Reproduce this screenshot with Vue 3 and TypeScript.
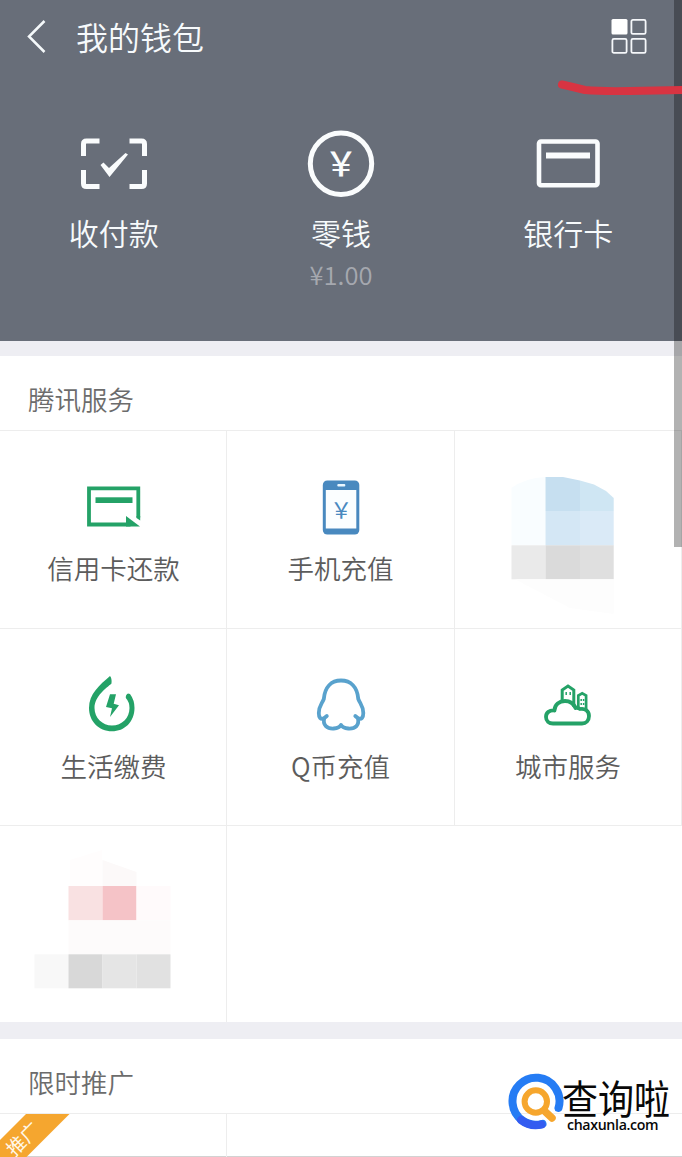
<script setup lang="ts">
interface Service {
  id: string
  label: string
}

const services: Service[] = [
  { id: 'credit', label: '信用卡还款' },
  { id: 'phone', label: '手机充值' },
  { id: 'mosaic-blue', label: '' },
  { id: 'utility', label: '生活缴费' },
  { id: 'qcoin', label: 'Q币充值' },
  { id: 'city', label: '城市服务' },
  { id: 'mosaic-red', label: '' },
]
</script>

<template>
  <div class="screen">
    <header class="bar">
      <svg class="back" width="24" height="40" viewBox="24 17 24 40">
        <path d="M44.500 21 L29 36.500 L44.500 52" fill="none" stroke="#f5f9fb" stroke-width="2.500" />
      </svg>
      <h1 class="title">我的钱包</h1>
      <svg class="menu" width="36" height="36" viewBox="0 0 36 36" fill="none" stroke="#f5f7fa" stroke-width="1.800">
        <rect x="0.500" y="1" width="16" height="15.500" rx="1.500" fill="#fff" stroke="none" />
        <rect x="20.400" y="1.900" width="14.200" height="14" rx="1.500" />
        <rect x="1.400" y="20.900" width="14.200" height="14" rx="1.500" />
        <rect x="20.400" y="20.900" width="14.200" height="14" rx="1.500" />
      </svg>
    </header>

    <section class="hero">
      <div class="hero-item">
        <svg class="icon" viewBox="73.500 124 80 80">
          <g fill="none" stroke="#fafcfd" stroke-width="5">
            <path d="M99 141 H86 Q83 141 83 144 V156" />
            <path d="M129 141 H141 Q144 141 144 144 V156" />
            <path d="M99 186.500 H86 Q83 186.500 83 183.500 V170" />
            <path d="M129 186.500 H141 Q144 186.500 144 183.500 V170" />
          </g>
          <path d="M100 165 L103 162.500 L108.500 168 L125 153 L127.500 154.500 L109 177 Z" fill="#fafcfd" />
        </svg>
        <span class="hero-label">收付款</span>
      </div>
      <div class="hero-item">
        <svg class="icon" viewBox="300.700 124 80 80">
          <circle cx="340.700" cy="163.800" r="30.700" fill="none" stroke="#fafcfd" stroke-width="5" />
          <text class="yuan" x="340.700" y="176" font-size="33" fill="#fafcfd">&#xFFE5;</text>
        </svg>
        <span class="hero-label">零钱</span>
        <span class="amount">¥1.00</span>
      </div>
      <div class="hero-item">
        <svg class="icon" viewBox="528 124 80 80">
          <rect x="539" y="141.500" width="58.500" height="43.700" rx="2" fill="none" stroke="#fafcfd" stroke-width="4.600" />
          <rect x="546" y="152.500" width="44" height="6" fill="#fafcfd" />
        </svg>
        <span class="hero-label">银行卡</span>
      </div>
    </section>

    <section class="block">
      <h2 class="block-title">腾讯服务</h2>
      <div class="grid services">
        <div v-for="s in services" :key="s.id" class="cell">
          <svg v-if="s.id === 'credit'" class="icon" viewBox="73.500 468 80 80">
            <path d="M137.800 517.500 V488.300 H88.500 V524.500 H130" fill="none" stroke="#24a267" stroke-width="3.800" />
            <rect x="95" y="497.300" width="37" height="5.700" fill="#24a267" />
            <path d="M125.500 526.400 V516 L139.500 526.400 Z" fill="#24a267" />
            <path d="M136 516 H139.700 V520.500 L136 518 Z" fill="#24a267" />
          </svg>
          <svg v-else-if="s.id === 'phone'" class="icon" viewBox="300.700 468 80 80">
            <rect x="322.500" y="480.500" width="36.500" height="54" rx="4.500" fill="#4989bf" />
            <rect x="325.500" y="490" width="30.500" height="38.500" fill="#fbfeff" />
            <rect x="337" y="484" width="8" height="2.500" rx="1" fill="#eaf7ff" />
            <text class="yuan thin" x="340.900" y="518" font-size="22" fill="#4989bf">&#xFFE5;</text>
          </svg>
          <svg v-else-if="s.id === 'utility'" class="icon" viewBox="73.500 666 80 80">
            <path d="M109.500 676 Q111.500 678 111 683.500 C106 688 94 696 94 708 C94 718 102 725.500 111.500 725.500 C121.500 725.500 129 718 129 708 Q129 702 125.300 698 Q125 694.500 127.500 693.500 L129.500 694 Q134 700 134 708 C134 722 124 731.300 111.500 731.300 C98 731.300 88.500 721 88.500 708 C88.500 694 99 685 109.500 676 Z" fill="#24a267" />
            <path d="M109.500 694.300 L115.500 694.300 L113.200 703.800 L118.500 705.300 L109.500 717 L111.500 708.200 L105.500 707 Z" fill="#24a267" />
          </svg>
          <svg v-else-if="s.id === 'qcoin'" class="icon" viewBox="300.700 666 80 80">
            <path
              d="M326.500 716 L323.500 718.500 Q318.500 720 318.500 713 C318.500 706 321.500 704 323.500 699 C324.500 687 331 680.500 340.700 680.500 C350.500 680.500 357 687 358 699 C360 704 363 706 363 713 Q363 720 358 718.500 L355 716 M324 718 C322 725 327 729 333.500 728.500 Q339 728 340.700 725 Q342.500 728 348 728.500 C355 729 359.500 725 357.500 718"
              fill="none" stroke="#59a2cd" stroke-width="3.800" stroke-linejoin="round" stroke-linecap="round"
            />
          </svg>
          <svg v-else-if="s.id === 'city'" class="icon" viewBox="528 666 80 80" fill="none" stroke="#24a267">
            <path d="M553 723.500 C549 723.500 546 721 546 717 C546 712.500 549.500 710 554.500 710.500 C554.500 704.500 559.500 701 565 701 C570 701 573.500 703.500 575.500 708 Q577.500 707.200 580 709 C585 708 589 711 589 716 C589 720.500 586 723.500 582 723.500 Z" stroke-width="3.800" stroke-linejoin="round" />
            <path d="M562.200 702 V690 L568 686 L573.800 690 V707" stroke-width="3" />
            <path d="M578.300 709 V695.500 L582.200 693.300 L586.100 695.500 V710" stroke-width="2.700" />
            <path d="M566.200 692 V695 M570.200 692 V695 M581.200 699 V701 M583.600 699 V701 M581.200 703 V705 M583.600 703 V705" stroke-width="1.500" />
          </svg>
          <svg v-else-if="s.id === 'mosaic-blue'" class="mosaic" viewBox="455 431 227 197">
            <path d="M511.500 488 Q525 478 545.500 477 V545 H511.500 Z" fill="#f9fdff" />
            <path d="M545.500 477 H563 L580 480.500 V511 H545.500 Z" fill="#c6dff0" />
            <path d="M580 480.500 L594 484.500 L606 491 L613.700 498 V511 H580 Z" fill="#cfe6f3" />
            <rect x="545.500" y="511" width="34.500" height="34.500" fill="#d4e7f5" />
            <rect x="580" y="511" width="33.700" height="34.500" fill="#daeaf7" />
            <rect x="511.500" y="545.300" width="34" height="34" fill="#eaeaea" />
            <rect x="545.500" y="545.300" width="34.500" height="34" fill="#dadada" />
            <rect x="580" y="545.300" width="33.700" height="34" fill="#dfdfdf" />
            <path d="M515 579.300 H613.700 V614 L570 608 Z" fill="#fdfdfd" />
          </svg>
          <svg v-else class="mosaic" viewBox="0 826 227 197">
            <path d="M70 860 L102 850 V886 H70 Z" fill="#fffdfd" />
            <path d="M102.500 860 L136.500 872 V886 H102.500 Z" fill="#fcf9f9" />
            <rect x="68.500" y="886" width="34" height="34.300" fill="#f9e1e2" />
            <rect x="102.500" y="886" width="34" height="34.300" fill="#f5c3c7" />
            <rect x="136.500" y="886" width="34" height="34.300" fill="#fffafb" />
            <rect x="68.500" y="920.300" width="102" height="34" fill="#fdfbfb" />
            <rect x="34.500" y="954.300" width="34" height="34" fill="#f8f8f8" />
            <rect x="68.500" y="954.300" width="34" height="34" fill="#d8d8d8" />
            <rect x="102.500" y="954.300" width="34" height="34" fill="#e5e5e5" />
            <rect x="136.500" y="954.300" width="34" height="34" fill="#e1e1e1" />
          </svg>
          <span v-if="s.label" class="label">{{ s.label }}</span>
        </div>
      </div>
    </section>

    <section class="block promo">
      <h2 class="block-title">限时推广</h2>
      <div class="grid">
        <div class="cell promo-cell">
          <svg class="ribbon" width="70" height="43" viewBox="0 1114 70 43">
            <path d="M26 1114 H69.500 L26.500 1157 H0 V1140 Z" fill="#f5a62f" />
            <text class="ribbon-text" transform="translate(14.500 1157.500) rotate(-45)" font-size="19" fill="#fff8e9">推广</text>
          </svg>
        </div>
      </div>
    </section>

    <div class="scrollbar"></div>
    <svg class="marker" width="126" height="24" viewBox="556 76 126 24">
      <path d="M562 84.500 Q573 87 585 90 Q600 91.500 630 91 L684 90" fill="none" stroke="#d83442" stroke-width="8" stroke-linecap="round" />
    </svg>

    <div class="watermark">
      <svg class="logo" width="60" height="60" viewBox="506 1072 60 60" fill="none">
        <path d="M542.500 1123.800 A23.500 23.500 0 1 1 558.500 1108" stroke="#257cf4" stroke-width="8" stroke-linecap="round" />
        <path d="M521 1120 Q530 1127 541.500 1124.500" stroke="#335cf0" stroke-width="8" stroke-linecap="round" />
        <circle cx="535.800" cy="1101.500" r="11.200" stroke="#f6a62d" stroke-width="6" />
        <path d="M544.500 1111 L552 1118" stroke="#f6a62d" stroke-width="7.500" stroke-linecap="round" />
      </svg>
      <div class="brand">
        <span class="brand-name">查询啦</span>
        <span class="brand-url">chaxunla.com</span>
      </div>
    </div>
  </div>
</template>

<style>
body {
  margin: 0;
}
</style>

<style scoped>
.screen {
  position: relative;
  width: 682px;
  height: 1157px;
  overflow: hidden;
  background: #eeeef3;
  font-family: "Noto Sans CJK SC", sans-serif;
  font-weight: 350;
  box-sizing: border-box;
}
.bar {
  display: flex;
  align-items: center;
  height: 74px;
  background: #686e79;
  padding: 0 35px 0 24px;
  box-sizing: border-box;
}
.title {
  margin: 0 auto 0 28px;
  color: #f7fafc;
  font-size: 32px;
  font-weight: 350;
  line-height: 72px;
  height: 74px;
}
.menu {
  margin-bottom: 2px;
}
.hero {
  display: grid;
  grid-template-columns: repeat(3, 1fr);
  height: 267px;
  padding-top: 50px;
  box-sizing: border-box;
  background: #686e79;
}
.hero-item,
.cell {
  display: flex;
  flex-direction: column;
  align-items: center;
}
.icon {
  width: 80px;
  height: 80px;
  flex: none;
}
.yuan {
  text-anchor: middle;
  font-weight: 500;
}
.thin {
  font-weight: 400;
}
.hero-label {
  margin-top: 8px;
  font-size: 30px;
  line-height: 40px;
  color: #f7fafc;
}
.amount {
  margin-top: 6px;
  font-size: 25.500px;
  line-height: 32px;
  color: #a5a8af;
}
.block {
  margin-top: 15px;
  background: #fff;
}
.block-title {
  margin: 0;
  height: 74px;
  padding: 6px 28px 0;
  box-sizing: border-box;
  font-size: 26.500px;
  font-weight: 350;
  line-height: 73px;
  color: #6c6c6c;
}
.grid {
  display: grid;
  grid-template-columns: 227px 228px 227px;
  border-top: 1px solid #ededed;
}
.services {
  grid-template-rows: 198px 197px 196px;
}
.cell {
  padding-top: 37px;
  box-sizing: border-box;
  border-right: 1px solid #ededed;
  border-bottom: 1px solid #ededed;
}
.cell:nth-child(3n + 1) {
  padding-left: 1px;
}
.cell:nth-child(7) {
  border-bottom: 0;
}
.label {
  margin-top: 2px;
  font-size: 26.500px;
  line-height: 36px;
  color: #5c5c5c;
}
.mosaic {
  width: 227px;
  height: 197px;
  flex: none;
  margin-top: -37px;
}
.promo {
  margin-top: 17px;
}
.grid .promo-cell {
  padding: 0;
  align-items: flex-start;
  border-bottom: 0;
}
.promo .promo-cell:nth-child(3n + 1) {
  padding-left: 0;
}
.promo .grid {
  height: 44px;
  box-sizing: border-box;
  border-bottom: 1px solid #d2d2d2;
}
.ribbon {
  flex: none;
}
.ribbon-text {
  font-weight: 400;
}
.scrollbar {
  position: absolute;
  top: 0;
  right: 0;
  width: 8px;
  height: 547px;
  background: rgba(0, 0, 0, 0.3);
}
.marker {
  position: absolute;
  top: 76px;
  right: 0;
}
.watermark {
  position: absolute;
  left: 506px;
  top: 1072px;
  display: flex;
  align-items: flex-start;
}
.logo {
  flex: none;
}
.brand {
  display: flex;
  flex-direction: column;
  margin-left: -4px;
  color: #080808;
}
.brand-name {
  font-size: 36px;
  font-weight: 400;
  line-height: 40px;
  margin-top: 4px;
  transform: scaleY(1.1);
}
.brand-url {
  margin: 0 0 0 5px;
  font-family: "Open Sans", sans-serif;
  font-size: 14.200px;
  font-weight: 600;
  line-height: 18px;
  letter-spacing: -0.350px;
}
</style>
